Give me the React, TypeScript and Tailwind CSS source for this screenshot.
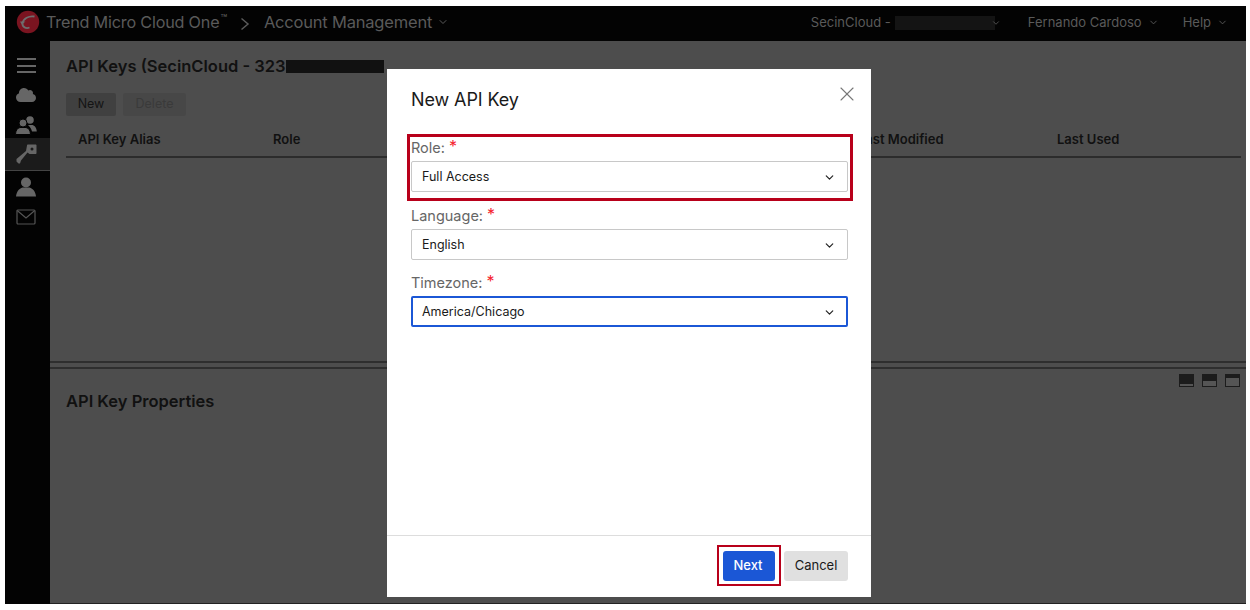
import { ChevronDown, X } from 'lucide-react'
import { FaCloud } from 'react-icons/fa'

const font = { fontFamily: 'Inter, "Liberation Sans", sans-serif' }

function Logo() {
  return (
    <svg width="24" height="24" viewBox="0 0 24 24" className="shrink-0 -mt-[1px]">
      <circle cx="12" cy="12" r="11.2" fill="#7a1420" />
      <path d="M18.5 6.5C13 5.5 7 8.5 6.500 13.500c-.3 3.500 3.500 5.500 7 4" fill="none" stroke="#6e6e6e" strokeWidth="1.8" />
      <path d="M9.500 11.500 5.800 14.600 4 11.500Z" fill="#6e6e6e" />
    </svg>
  )
}

function Users() {
  return (
    <svg width="22" height="20" viewBox="0 0 22 20" fill="#666">
      <circle cx="15" cy="5" r="3.800" />
      <path d="M13 10h3.500c3 0 5 2.500 5.300 6.500H17c-.5-2.500-2-4.500-4-6.500Z" />
      <circle cx="8" cy="8" r="4" stroke="#030303" strokeWidth="1" />
      <path d="M.5 19.500c0-4 2-6.500 4.500-7h6c2.500.5 4.500 3 4.500 7Z" stroke="#030303" strokeWidth="1" />
    </svg>
  )
}

function Key() {
  return (
    <svg width="21" height="20" viewBox="0 0 21 20" fill="#666">
      <path d="M11 1.500C11 .8 11.500.5 12 .5h7.500c.6 0 1 .4 1 1V9c0 .6-.4 1-1 1h-6l-2-1.500L5 16.500l-1 3H2.500L.5 17.500v-2.500l9.500-8Z" />
      <circle cx="16" cy="5" r="1.500" fill="#1b1b1b" />
    </svg>
  )
}

function Person() {
  return (
    <svg width="20" height="20" viewBox="0 0 20 20" fill="#666">
      <circle cx="10" cy="5.500" r="5" />
      <path d="M6.500 10.500h7c3.500 1 6 4 6.500 9H0c.5-5 3-8 6.500-9Z" />
    </svg>
  )
}

function Mail() {
  return (
    <svg width="20" height="16" viewBox="0 0 20 16" fill="none" stroke="#555" strokeWidth="1.2">
      <rect x="1" y="1" width="18" height="14" rx="1" />
      <path d="M1.500 1.800 10 9l8.500-7.200" />
    </svg>
  )
}

function Sidebar() {
  return (
    <aside className="w-[45px] shrink-0 bg-[#030303] flex flex-col items-stretch pt-[17px]">
      <div className="h-[15px] flex flex-col justify-between items-center mb-[14px] pr-[3px]">
        <div className="w-[19px] h-[2px] bg-[#666]" />
        <div className="w-[19px] h-[2px] bg-[#666]" />
        <div className="w-[19px] h-[2px] bg-[#666]" />
      </div>
      <div className="h-[16px] flex items-center justify-center mb-[12px] pr-[3px]">
        <FaCloud size={20} color="#666" />
      </div>
      <div className="h-[20px] flex items-center justify-center mb-[3px] pr-[3px]">
        <Users />
      </div>
      <div className="h-[33px] flex items-center justify-center bg-[#1b1b1b] border-b border-[#444] pr-[3px]">
        <Key />
      </div>
      <div className="h-[31px] flex items-center justify-center pr-[3px]">
        <Person />
      </div>
      <div className="h-[30px] flex items-center justify-center pr-[3px]">
        <Mail />
      </div>
    </aside>
  )
}

function Header() {
  return (
    <header className="h-[35px] shrink-0 bg-[#030303] flex items-center pl-[11px] pr-[18px] pb-[3px] text-[#5a5a5a]">
      <Logo />
      <span className="ml-[6px] text-[16.200px] tracking-[-0.2px] whitespace-nowrap">
        Trend Micro Cloud One<sup className="text-[11px] ml-px">™</sup>
      </span>
      <svg width="10" height="14" viewBox="0 0 10 14" fill="none" stroke="#5a5a5a" strokeWidth="1.5" className="ml-[13px] mr-[14px] mt-[4px]">
        <path d="M1.500 1.500 8 7l-6.500 5.500" />
      </svg>
      <span className="text-[16.500px] tracking-[-0.2px] whitespace-nowrap">Account Management</span>
      <ChevronDown size={12} className="ml-[5px]" />
      <div className="ml-auto flex items-center text-[13px] mt-[1px]">
        <span className="whitespace-nowrap w-[84px]">SecinCloud -</span>
        <div className="w-[100px] h-[14px] bg-[#141414]" />
        <ChevronDown size={10} className="ml-[-4px]" />
        <span className="ml-[27px] whitespace-nowrap">Fernando Cardoso</span>
        <ChevronDown size={11} className="ml-[6px]" />
        <span className="ml-[24px]">Help</span>
        <ChevronDown size={11} className="ml-[6px]" />
      </div>
    </header>
  )
}

function PaneIcon({ fill }: { fill: string }) {
  return (
    <div className="w-[15px] h-[13px] bg-[#1c1c1c] flex flex-col justify-end px-[1px] pb-[1px]">
      <div className={`bg-[#555] ${fill}`} />
    </div>
  )
}

function Content() {
  return (
    <main className="flex-1 min-w-0 bg-[#4d4d4d] flex flex-col text-[#111] border-b border-[#222]">
      <div className="h-[320px] shrink-0 pl-[16px] pt-[15px]">
        <div className="flex items-center h-[20px]">
          <h2 className="text-[16.500px] font-semibold whitespace-nowrap">API Keys (SecinCloud - 323</h2>
          <div className="w-[98px] h-[13px] bg-[#111]" />
        </div>
        <div className="flex gap-[7px] mt-[17px]">
          <button className="w-[50px] h-[23px] bg-[#404040] rounded-[2px] text-[12.500px] text-[#141414]">New</button>
          <button className="w-[63px] h-[23px] bg-[#474747] rounded-[2px] text-[12.500px] text-[#3a3a3a]">Delete</button>
        </div>
        <div className="mt-[12px] mr-[5px] h-[30px] border-b-2 border-[#2c2c2c] pl-[12px] grid grid-cols-[195px_195px_195px_195px_199px_1fr] items-center text-[13px] font-semibold pb-[5px]">
          <span>API Key Alias</span>
          <span>Role</span>
          <span />
          <span />
          <span>Last Modified</span>
          <span>Last Used</span>
        </div>
      </div>
      <div className="h-[8px] shrink-0 border-y-2 border-[#2e2e2e]" />
      <div className="flex justify-end gap-[8px] pr-[6px] pt-[5px]">
        <PaneIcon fill="h-[2px]" />
        <PaneIcon fill="h-[5px]" />
        <PaneIcon fill="h-[8px]" />
      </div>
      <h2 className="mt-[2px] pl-[16px] text-[16.500px] font-semibold">API Key Properties</h2>
    </main>
  )
}

function Field({ label, value, focused }: { label: string; value: string; focused?: boolean }) {
  return (
    <div>
      <label className="flex h-[20px] items-center text-[14.500px] text-[#666] pt-[1px]">
        {label}
        <span className="ml-[4px] -mt-[4px] text-[16px] text-[#f5222d]">*</span>
      </label>
      <div
        className={`mt-[4px] h-[31px] rounded-[2px] border flex items-center justify-between pt-[1px] text-[12.500px] text-[#1a1a1a] ${
          focused ? 'border-[#1b57d6] border-2 pl-[9px] pr-[10px]' : 'border-[#c8c8c8] pl-[10px] pr-[11px]'
        }`}
      >
        {value}
        <ChevronDown size={13} strokeWidth={2.2} className="text-[#222]" />
      </div>
    </div>
  )
}

function Modal() {
  return (
    <div className="absolute left-[387px] top-[69px] w-[484px] h-[528px] bg-white flex flex-col">
      <div className="h-[68px] shrink-0 pl-[24px] pr-[23px] flex items-center justify-between">
        <h3 className="text-[18px] font-normal tracking-[-0.1px] text-[#1a1a1a] mt-[-7px]">New API Key</h3>
        <X size={24} strokeWidth={1.1} className="text-[#777] mt-[-18px] mr-[-11px]" />
      </div>
      <div className="flex-1 pl-[24px] pr-[23px] flex flex-col">
        <div className="relative">
          <Field label="Role:" value="Full Access" />
          <div className="absolute -left-[4px] -top-[3px] w-[446px] h-[67px] border-[3px] border-[#b8001a]" />
        </div>
        <div className="mt-[13px]">
          <Field label="Language:" value="English" />
        </div>
        <div className="mt-[12px]">
          <Field label="Timezone:" value="America/Chicago" focused />
        </div>
      </div>
      <div className="h-[62px] shrink-0 border-t border-[#ddd] flex items-center justify-end gap-[9px] pr-[23px] pb-[2px]">
        <div className="relative">
          <button className="block w-[52px] h-[30px] rounded-[3px] bg-[#1b57d6] text-white text-[13px] font-medium pr-[2px] pt-[1px]">Next</button>
          <div className="absolute -left-[6px] -top-[6px] w-[64px] h-[41px] border-2 border-[#b8001a]" />
        </div>
        <button className="w-[64px] h-[30px] rounded-[3px] bg-[#e0e0e0] text-[#1a1a1a] text-[13px] pt-[1px]">Cancel</button>
      </div>
    </div>
  )
}

export default function App() {
  return (
    <div style={font} className="relative w-[1250px] h-[610px] bg-white overflow-hidden pl-[5px] pt-[6px] pr-[4px] pb-[6px]">
      <div className="h-full flex flex-col">
        <Header />
        <div className="flex-1 flex min-h-0">
          <Sidebar />
          <Content />
        </div>
      </div>
      <Modal />
    </div>
  )
}
